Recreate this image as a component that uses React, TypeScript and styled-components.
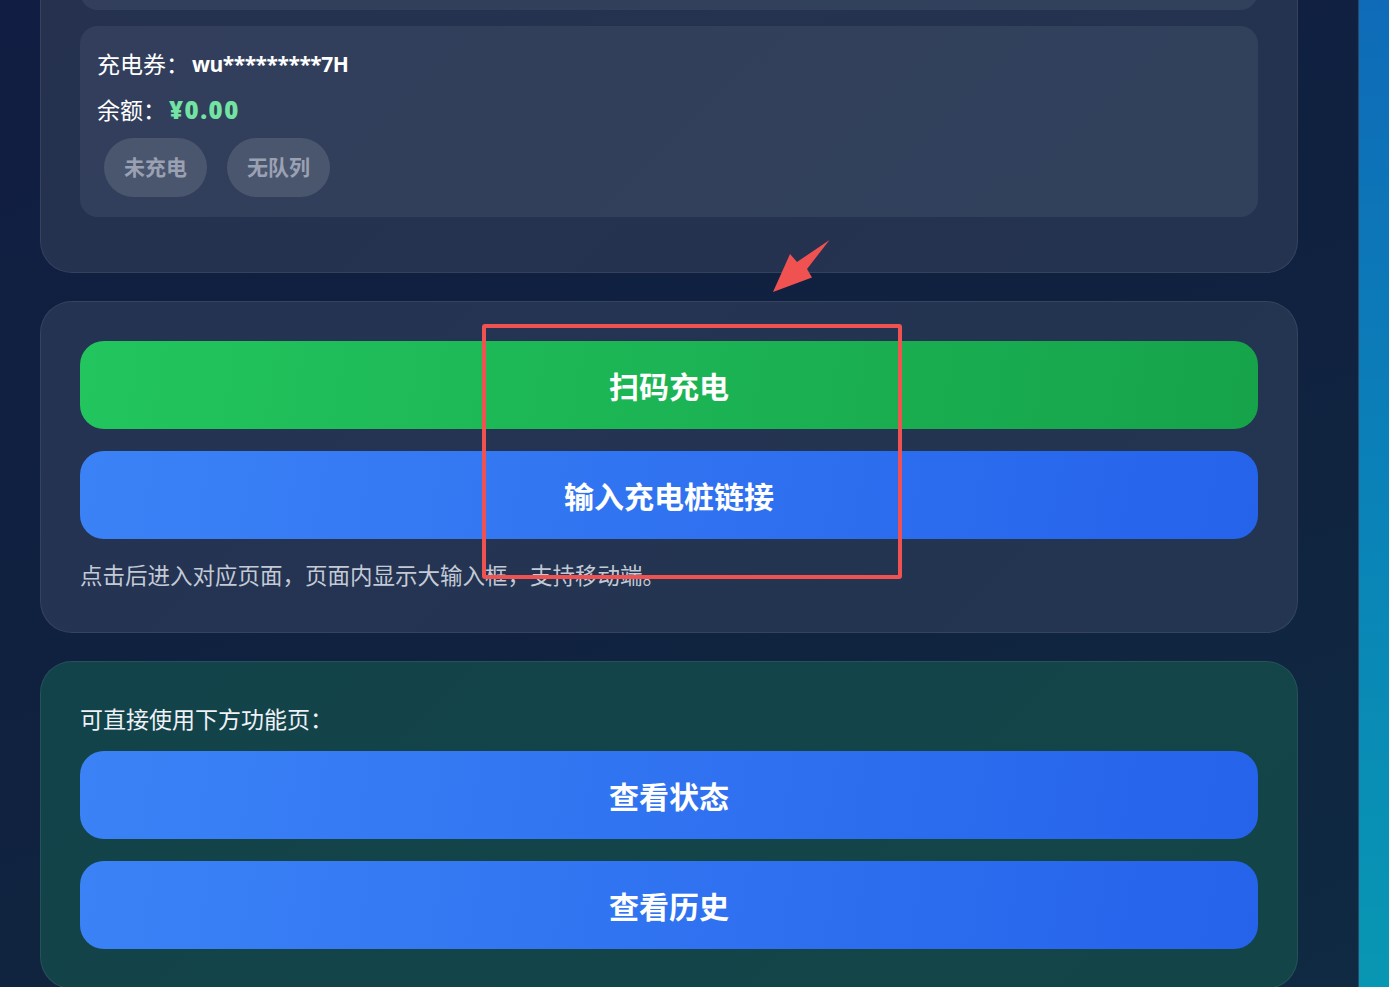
import React from 'react';
import styled, { createGlobalStyle } from 'styled-components';

const GlobalStyle = createGlobalStyle`
    html, body {
        margin: 0;
        padding: 0;
        background: #101f40;
    }
    body {
        font-family: "Noto Sans", "Noto Sans CJK SC", sans-serif;
        color: #ffffff;
    }
`;

const Page = styled.div`
    position: relative;
    display: flex;
    width: 100%;
    height: 987px;
    overflow: hidden;
    background: linear-gradient(160deg, #111d42 0%, #10223f 55%, #0f2a42 100%);
`;

const Main = styled.main`
    flex: 1;
    display: flex;
    flex-direction: column;
    gap: 28px;
    padding: 0 60px 0 40px;
    margin-top: -150px;
`;

const SidePanel = styled.aside`
    width: 30px;
    flex-shrink: 0;
    border-left: 1px solid #2c4664;
    background: linear-gradient(180deg, #0f6bb8 0%, #0a82b8 50%, #0897b3 100%);
`;

const Card = styled.section<{ tone?: 'slate' | 'navy' | 'teal'; bottom?: number }>`
    display: flex;
    flex-direction: column;
    padding: 39px 39px ${p => p.bottom ?? 39}px;
    border-radius: 32px;
    border: 1px solid rgba(255, 255, 255, 0.08);
    background: ${p =>
        p.tone === 'teal'
            ? 'linear-gradient(135deg, #13434a, #134548)'
            : p.tone === 'navy'
            ? 'linear-gradient(135deg, #243352, #233551)'
            : 'linear-gradient(135deg, #25314f, #243350)'};
`;

const InfoBox = styled.div<{ height?: number }>`
    display: flex;
    flex-direction: column;
    align-items: flex-start;
    padding: 15px 17px 20px;
    border-radius: 18px;
    background: linear-gradient(135deg, #323e5b, #31415c);
    ${p => (p.height ? `height: ${p.height}px; box-sizing: border-box;` : '')}
`;

const Stack = styled.div`
    display: flex;
    flex-direction: column;
    gap: 16px;
`;

const InfoLine = styled.div`
    display: flex;
    align-items: center;
    height: 46px;
    font-size: 23px;
    line-height: 46px;
    color: #ffffff;
`;

const Code = styled.b`
    margin-left: 3px;
    font-family: "Open Sans", "Noto Sans CJK SC", sans-serif;
    font-weight: 700;
    font-size: 21px;
    letter-spacing: -0.5px;
    line-height: 46px;
`;

const Money = styled.b`
    margin-left: 3px;
    font-family: "Open Sans", "Noto Sans CJK SC", sans-serif;
    font-weight: 800;
    font-size: 24px;
    letter-spacing: 1.5px;
    line-height: 46px;
    color: #72e3a2;
`;

const PillRow = styled.div`
    display: flex;
    gap: 20px;
    margin-top: 5px;
    padding-left: 7px;
`;

const Pill = styled.span`
    height: 59px;
    line-height: 59px;
    padding: 0 20px;
    border-radius: 30px;
    background: rgba(255, 255, 255, 0.12);
    color: #9aa1b3;
    font-size: 21px;
    font-weight: 700;
`;

const Buttons = styled.div`
    display: flex;
    flex-direction: column;
    gap: 22px;
`;

const ActionButton = styled.button<{ variant?: 'green' | 'blue' }>`
    height: 88px;
    border: none;
    border-radius: 24px;
    color: #ffffff;
    font-family: "Noto Sans", "Noto Sans CJK SC", sans-serif;
    font-size: 30px;
    font-weight: 700;
    cursor: pointer;
    background: ${p =>
        p.variant === 'green'
            ? 'linear-gradient(100deg, #22c55e 0%, #16a34a 100%)'
            : 'linear-gradient(100deg, #3b82f6 0%, #2563eb 100%)'};
`;

const Note = styled.p`
    margin: 20px 0 0;
    font-size: 22.5px;
    line-height: 34px;
    color: #c3cad6;
`;

const Label = styled.p`
    margin: 0 0 14px;
    font-size: 23px;
    line-height: 36px;
    color: #eef2f7;
`;

const Highlight = styled.div`
    position: absolute;
    left: 482px;
    top: 324px;
    width: 420px;
    height: 255px;
    box-sizing: border-box;
    border: 4px solid #f05252;
    border-radius: 3px;
    pointer-events: none;
`;

const Arrow = styled.svg`
    position: absolute;
    left: 760px;
    top: 230px;
    pointer-events: none;
`;

export default function App() {
    return (
        <>
            <GlobalStyle />
            <Page>
                <Main>
                    <Card bottom={55}>
                        <Stack>
                            <InfoBox height={120} />
                            <InfoBox>
                                <InfoLine>充电券：<Code>wu*********7H</Code></InfoLine>
                                <InfoLine>余额：<Money>¥0.00</Money></InfoLine>
                                <PillRow>
                                    <Pill>未充电</Pill>
                                    <Pill>无队列</Pill>
                                </PillRow>
                            </InfoBox>
                        </Stack>
                    </Card>

                    <Card tone="navy">
                        <Buttons>
                            <ActionButton variant="green">扫码充电</ActionButton>
                            <ActionButton>输入充电桩链接</ActionButton>
                        </Buttons>
                        <Note>点击后进入对应页面，页面内显示大输入框，支持移动端。</Note>
                    </Card>

                    <Card tone="teal">
                        <Label>可直接使用下方功能页：</Label>
                        <Buttons>
                            <ActionButton>查看状态</ActionButton>
                            <ActionButton>查看历史</ActionButton>
                        </Buttons>
                    </Card>
                </Main>
                <SidePanel />

                <Arrow width="80" height="70" viewBox="760 230 80 70">
                    <polygon
                        points="829.5,240 807,269 812,277.5 773,292 790,254 797,262"
                        fill="#f05252"
                    />
                </Arrow>
                <Highlight />
            </Page>
        </>
    );
}
